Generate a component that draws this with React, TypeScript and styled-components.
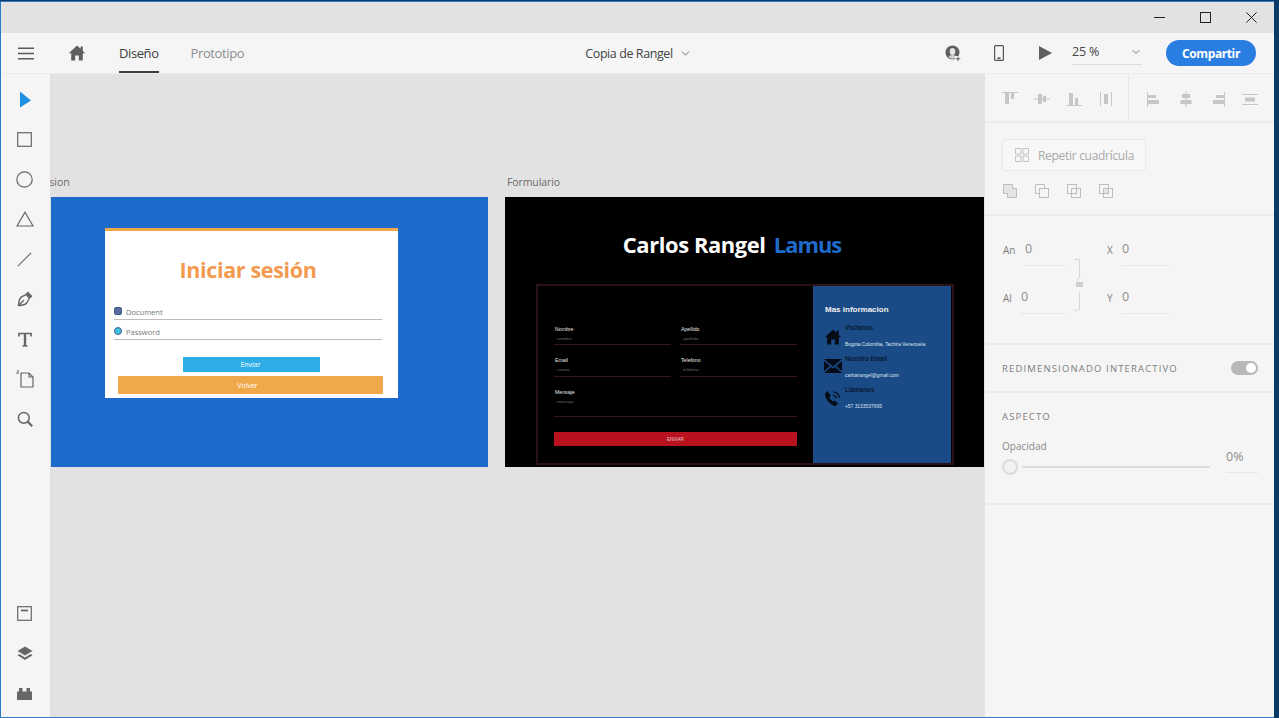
import React from 'react';
import styled, { createGlobalStyle } from 'styled-components';
import { ChevronDown } from 'lucide-react';

const Global = createGlobalStyle`
  html, body { margin: 0; padding: 0; background: #0b3a66; }
  body { font-family: "Open Sans", "Noto Sans", sans-serif; }
  * { box-sizing: border-box; }
`;

const Window = styled.div`
  width: 1279px;
  height: 718px;
  padding: 1px 5px 1px 1px;
  background: linear-gradient(90deg, #2b7cc4 0, #2b7cc4 1274px, #0b3a66 1274px);
  border-top: 1px solid #0b3a66;
  display: flex;
  flex-direction: column;
  overflow: hidden;
`;

const TitleBar = styled.div`
  height: 31px;
  flex: none;
  background: #e2e2e2;
  display: flex;
  align-items: center;
  justify-content: flex-end;
  padding-bottom: 1px;
`;

const WinButton = styled.div`
  width: 46px;
  height: 30px;
  display: flex;
  align-items: center;
  justify-content: center;
`;

const TopBar = styled.div`
  height: 41px;
  flex: none;
  background: #f5f5f5;
  display: grid;
  grid-template-columns: 1fr auto 1fr;
  align-items: center;
  border-bottom: 1px solid #ececec;
`;

const TopLeft = styled.div`
  display: flex;
  align-items: center;
  height: 100%;
`;

const TopRight = styled.div`
  display: flex;
  align-items: center;
  justify-content: flex-end;
  height: 100%;
  padding-right: 18px;
`;

const IconSlot = styled.div<{ $w: number; $ml?: number }>`
  width: ${p => p.$w}px;
  margin-left: ${p => p.$ml ?? 0}px;
  display: flex;
  align-items: center;
  justify-content: center;
  flex: none;
`;

const Tab = styled.div<{ $active?: boolean }>`
  height: 100%;
  display: flex;
  align-items: center;
  margin-right: 32px;
  padding-top: 2px;
  font-size: 13px;
  letter-spacing: -0.4px;
  color: ${p => (p.$active ? '#3c3c3c' : '#8e8e8e')};
  border-bottom: 2px solid ${p => (p.$active ? '#3c3c3c' : 'transparent')};
`;

const DocTitle = styled.div`
  display: flex;
  align-items: center;
  gap: 6px;
  font-size: 12.5px;
  letter-spacing: -0.42px;
  color: #444;
  padding-left: 2px;
`;

const Zoom = styled.div`
  width: 70px;
  height: 25px;
  margin: -2px 24px 0 10px;
  border-bottom: 1px solid #dedede;
  display: flex;
  align-items: center;
  justify-content: space-between;
  font-size: 12.5px;
  letter-spacing: -0.2px;
  color: #444;
  padding: 2px 0;
`;

const ShareButton = styled.div`
  width: 90px;
  height: 26px;
  border-radius: 13px;
  background: #2a7de1;
  color: #fff;
  font-size: 12px;
  font-weight: 700;
  letter-spacing: -0.4px;
  display: flex;
  align-items: center;
  justify-content: center;
`;

const Body = styled.div`
  flex: 1;
  min-height: 0;
  display: flex;
`;

const Tools = styled.div`
  width: 49px;
  flex: none;
  background: #f5f5f5;
  display: flex;
  flex-direction: column;
  justify-content: space-between;
  padding: 13px 0 12px;
  z-index: 1;
`;

const ToolGroup = styled.div<{ $gap: number }>`
  display: flex;
  flex-direction: column;
  align-items: center;
  gap: ${p => p.$gap}px;
  padding-right: 2px;
`;

const ToolIcon = styled.div`
  width: 24px;
  height: 24px;
  display: flex;
  align-items: center;
  justify-content: center;
`;

const Canvas = styled.div`
  flex: 1;
  position: relative;
  background: #e2e2e2;
  overflow: hidden;
`;

const ArtLabel = styled.div<{ $x: number }>`
  position: absolute;
  left: ${p => p.$x}px;
  top: 101px;
  font-size: 10.5px;
  letter-spacing: -0.1px;
  color: #6b6b6b;
  white-space: nowrap;
`;

const Artboard = styled.div<{ $x: number; $w: number; $bg: string; $cut?: number }>`
  position: absolute;
  left: ${p => p.$x}px;
  top: 123px;
  width: ${p => p.$w}px;
  height: 270px;
  background: ${p => p.$bg};
  overflow: hidden;
  clip-path: inset(0 0 0 ${p => p.$cut ?? 0}px);
`;

const LoginCard = styled.div`
  width: 293px;
  height: 170px;
  margin: 31px 0 0 97px;
  background: #fff;
  border-top: 3px solid #f0a94a;
  display: flex;
  flex-direction: column;
`;

const LoginTitle = styled.div`
  margin-top: 26px;
  height: 26px;
  line-height: 26px;
  padding-right: 7px;
  text-align: center;
  font-size: 21.5px;
  font-weight: 700;
  letter-spacing: -0.35px;
  color: #f39a4f;
`;

const FieldStack = styled.div`
  margin-top: 17px;
  display: flex;
  flex-direction: column;
`;

const LoginField = styled.div`
  margin: 0 16px 0 9px;
  height: 20px;
  border-bottom: 1.5px solid #bdbdbd;
  display: flex;
  align-items: center;
  gap: 4px;
  font-size: 7.5px;
  color: #777;
  padding-top: 5px;
`;

const FieldIcon = styled.span<{ $round?: boolean; $color: string }>`
  width: 8px;
  height: 8px;
  border-radius: ${p => (p.$round ? '50%' : '2px')};
  background: ${p => p.$color};
  border: 1px solid #3f5f87;
  flex: none;
  margin-top: -2px;
`;

const SendButton = styled.div`
  align-self: flex-start;
  margin: 17px 0 4px 78px;
  width: 137px;
  height: 15px;
  background: #2eaee6;
  color: #fff;
  font-size: 7px;
  display: flex;
  align-items: center;
  justify-content: center;
  padding-right: 2px;
`;

const BackButton = styled.div`
  margin: 0 15px 0 13px;
  height: 18px;
  border-radius: 1px;
  background: #f0a94a;
  color: #fff;
  font-size: 7px;
  display: flex;
  align-items: center;
  justify-content: center;
  padding-right: 6px;
`;

const FormHeading = styled.div`
  margin-top: 33px;
  height: 30px;
  line-height: 30px;
  text-align: center;
  padding-right: 25px;
  font-size: 21.9px;
  font-weight: 700;
  letter-spacing: -0.4px;
  white-space: nowrap;
  color: #fff;
  span { color: #1e6bcc; margin-left: 3px; letter-spacing: -1px; }
`;

const FormBox = styled.div`
  margin: 24px 0 0 31px;
  width: 418px;
  height: 181px;
  border: 2px solid #2b1216;
  display: flex;
`;

const FormLeft = styled.div`
  width: 275px;
  flex: none;
  padding: 40px 0 0 16px;
  font-family: "Liberation Sans", sans-serif;
`;

const FormGrid = styled.div`
  width: 243px;
  display: grid;
  grid-template-columns: 117px 117px;
  column-gap: 9px;
  row-gap: 12px;
`;

const FormField = styled.div<{ $wide?: boolean; $h?: number }>`
  grid-column: ${p => (p.$wide ? '1 / 3' : 'auto')};
  height: ${p => p.$h ?? 19}px;
  border-bottom: 1px solid #3a1418;
`;

const FormLabel = styled.div`
  font-size: 5.2px;
  line-height: 6px;
  margin-left: 1px;
  color: #e6e6e6;
`;

const FormHint = styled.div`
  font-size: 4.4px;
  line-height: 5px;
  margin: 4px 0 0 3px;
  color: #6d6d6d;
`;

const FormSend = styled.div`
  margin-top: 15px;
  width: 243px;
  height: 14px;
  background: #b8121f;
  color: #e8c8c8;
  font-size: 4.5px;
  display: flex;
  align-items: center;
  justify-content: center;
`;

const FormInfo = styled.div`
  width: 138px;
  flex: none;
  background: #1a4b87;
  padding: 19px 0 0 11px;
  font-family: "Liberation Sans", sans-serif;
`;

const InfoTitle = styled.div`
  font-size: 8px;
  line-height: 10px;
  font-weight: 700;
  margin-left: 1px;
  color: #f0f0f0;
  margin-bottom: 9px;
`;

const InfoRow = styled.div`
  height: 31px;
  display: flex;
  gap: 3px;
`;

const InfoIcon = styled.div`
  width: 18px;
  padding-top: 4px;
  flex: none;
`;

const InfoHead = styled.div`
  font-size: 6.3px;
  line-height: 8px;
  font-weight: 700;
  color: #071a33;
`;

const InfoText = styled.div`
  font-size: 4.9px;
  line-height: 6px;
  margin-top: 10px;
  color: #dfe6ef;
  white-space: nowrap;
`;

const Panel = styled.div`
  width: 289px;
  flex: none;
  background: #f5f5f5;
  display: flex;
  flex-direction: column;
  color: #8a8a8a;
`;

const Section = styled.div<{ $h: number }>`
  height: ${p => p.$h}px;
  flex: none;
  border-bottom: 2px solid #ebebeb;
`;

const AlignRow = styled.div`
  height: 100%;
  display: flex;
`;

const AlignGroup = styled.div<{ $line?: boolean; $w: number }>`
  width: ${p => p.$w}px;
  padding-left: 17px;
  padding-top: 17px;
  display: flex;
  gap: 16px;
  border-right: ${p => (p.$line ? '1px solid #e6e6e6' : 'none')};
`;

const RepeatButton = styled.div`
  margin: 16px 0 0 17px;
  width: 144px;
  height: 32px;
  border: 1px solid #e8e8e8;
  border-radius: 3px;
  background: #f7f7f7;
  display: flex;
  align-items: center;
  gap: 9px;
  padding-left: 12px;
  font-size: 12px;
  letter-spacing: -0.3px;
  color: #a8a8a8;
`;

const PathRow = styled.div`
  margin: 13px 0 0 18px;
  display: flex;
  gap: 18px;
`;

const TransformGrid = styled.div`
  position: relative;
  padding: 22px 0 0 18px;
  display: grid;
  grid-template-columns: 104px 64px;
  row-gap: 20px;
`;

const MetricCell = styled.div`
  height: 28px;
  display: flex;
  align-items: flex-start;
`;

const MetricLabel = styled.span<{ $w: number }>`
  width: ${p => p.$w}px;
  flex: none;
  font-size: 10px;
  line-height: 24px;
  color: #7d7d7d;
`;

const MetricValue = styled.div<{ $w: number }>`
  width: ${p => p.$w}px;
  height: 28px;
  border-bottom: 1px solid #e6e6e6;
  font-size: 12.5px;
  line-height: 22px;
  color: #8f8f8f;
`;

const LinkMark = styled.svg`
  position: absolute;
  left: 88px;
  top: 43px;
`;

const CapsRow = styled.div`
  height: 100%;
  padding: 0 16px 0 17px;
  display: flex;
  align-items: center;
  justify-content: space-between;
`;

const CapsLabel = styled.div`
  font-size: 9.5px;
  letter-spacing: 1.15px;
  color: #7d7d7d;
`;

const Toggle = styled.div`
  width: 27px;
  height: 14px;
  border-radius: 7px;
  background: #b8b8b8;
  display: flex;
  justify-content: flex-end;
  align-items: center;
  padding-right: 2px;
  &::after {
    content: '';
    width: 10px;
    height: 10px;
    border-radius: 50%;
    background: #fff;
  }
`;

const AspectBody = styled.div`
  padding: 17px 16px 0 17px;
`;

const OpacityLabel = styled.div`
  margin-top: 16px;
  font-size: 10px;
  line-height: 14px;
  color: #8a8a8a;
`;

const SliderRow = styled.div`
  display: flex;
  align-items: center;
  height: 22px;
`;

const Thumb = styled.div`
  width: 16px;
  height: 16px;
  border-radius: 50%;
  border: 2px solid #dcdcdc;
  background: #f2f2f2;
  flex: none;
  margin-top: 6px;
`;

const Track = styled.div`
  width: 188px;
  height: 2px;
  margin: 6px 0 0 4px;
  background: #dcdcdc;
  flex: none;
`;

const Percent = styled.div`
  width: 32px;
  margin: -8px 0 0 16px;
  height: 26px;
  border-bottom: 1px solid #e6e6e6;
  font-size: 12.5px;
  line-height: 20px;
  color: #8f8f8f;
  flex: none;
`;

const HomeSvg = ({ size = 18, color = '#5f5f5f' }: { size?: number; color?: string }) => (
  <svg width={size} height={size} viewBox="0 0 18 18" fill={color}>
    <path d="M9 1.5 0.8 9.2h2.4V16.5h4V11.4h3.6v5.1h4V9.2h2.4l-2.4-2.3V2.6h-2.2v2.2z" />
  </svg>
);

const tool = '#666';

const toolIcons = [
  <svg key="sel" width="14" height="17" viewBox="0 0 14 17"><path d="M2 .5 13 9.500 2 16.500z" fill="#1f8fe0" /></svg>,
  <svg key="rect" width="15" height="15" viewBox="0 0 15 15" fill="none" stroke={tool} strokeWidth="1.2"><rect x=".7" y=".7" width="13.6" height="13.6" /></svg>,
  <svg key="circ" width="17" height="17" viewBox="0 0 17 17" fill="none" stroke={tool} strokeWidth="1.2"><circle cx="8.5" cy="8.5" r="7.7" /></svg>,
  <svg key="tri" width="18" height="16" viewBox="0 0 18 16" fill="none" stroke={tool} strokeWidth="1.2"><path d="M9 1.3 17 15H1z" /></svg>,
  <svg key="line" width="15" height="15" viewBox="0 0 15 15" fill="none" stroke={tool} strokeWidth="1.1"><path d="M.8 14.2 14.2.8" /></svg>,
  <svg key="pen" width="16" height="16" viewBox="0 0 16 16" fill="none" stroke={tool} strokeWidth="1.4"><path d="M1.5 14.500c.2-4 1-7 3-8.600L9 3.600l3.400 3.400-2.300 4.500c-1.600 2.200-4.600 3-8.600 3zM1.500 14.500 6.800 9.200" /><path d="M9.800 1.600 14.400 6.200" strokeWidth="3" /></svg>,
  <svg key="text" width="14" height="15" viewBox="0 0 14 15" fill="none" stroke={tool}><path d="M7 1.500V14" strokeWidth="2.4" /><path d="M1 4.500V1.500h12v3" strokeWidth="1.7" /><path d="M4.300 14h5.400" strokeWidth="1.400" /></svg>,
  <svg key="board" width="18" height="18" viewBox="0 0 18 18" fill="none" stroke={tool} strokeWidth="1.2"><path d="M5 3h8l4 4v10H5zM13 3v4h4M0 3h3M2 0v2" /></svg>,
  <svg key="zoom" width="16" height="16" viewBox="0 0 16 16" fill="none" stroke={tool}><circle cx="6.800" cy="6.800" r="5.400" strokeWidth="1.500" /><path d="m10.800 10.800 4.400 4.400" strokeWidth="2.200" /></svg>,
];

const bottomIcons = [
  <svg key="assets" width="15" height="15" viewBox="0 0 15 15" fill="none" stroke={tool} strokeWidth="1.200"><rect x=".7" y=".7" width="13.600" height="13.600" /><path d="M4 4.500h7" strokeWidth="1.800" /></svg>,
  <svg key="layers" width="16" height="15" viewBox="0 0 16 15" fill={tool}><path d="M8 .5 15.500 5 8 9.500.5 5z" /><path d="M2.300 8 .5 9.300 8 14l7.500-4.700L13.700 8 8 11.500z" /></svg>,
  <svg key="plugins" width="15" height="13" viewBox="0 0 15 13" fill={tool}><path d="M0 13V4.500h2V1h3.500v3.500h4V1H13v3.500h2V13z" /></svg>,
];

const AlignIcon = ({ kind }: { kind: number }) => {
  const c = '#c6c6c6';
  const shapes = [
    <g key="0"><path d="M0 1.500h16" stroke={c} /><rect x="3" y="2" width="4" height="11" fill={c} /><rect x="9" y="2" width="3" height="6" fill={c} /></g>,
    <g key="1"><path d="M0 8h16" stroke={c} /><rect x="4" y="3" width="4" height="10" fill={c} /><rect x="9" y="5" width="3" height="6" fill={c} /></g>,
    <g key="2"><path d="M0 14.500h16" stroke={c} /><rect x="3" y="2" width="4" height="12" fill={c} /><rect x="9" y="7" width="3" height="7" fill={c} /></g>,
    <g key="3"><path d="M2.500 1v14M13.500 1v14" stroke={c} /><rect x="6" y="3" width="4" height="10" fill={c} /></g>,
    <g key="4"><path d="M1.500 1v15" stroke={c} /><rect x="2" y="4" width="8" height="3" fill={c} /><rect x="2" y="9" width="11" height="4" fill={c} /></g>,
    <g key="5"><path d="M8 0v16" stroke={c} /><rect x="4" y="3" width="8" height="4" fill={c} /><rect x="2.500" y="9" width="11" height="4" fill={c} /></g>,
    <g key="6"><path d="M14.500 1v15" stroke={c} /><rect x="6" y="4" width="8" height="3" fill={c} /><rect x="3" y="9" width="11" height="4" fill={c} /></g>,
    <g key="7"><path d="M0 3.500h16M0 13.500h16" stroke={c} /><rect x="3" y="6.500" width="10" height="4" fill={c} /></g>,
  ];
  return <svg width="16" height="16" viewBox="0 0 16 16">{shapes[kind]}</svg>;
};

const PathIcon = ({ mode }: { mode: number }) => (
  <svg width="14" height="14" viewBox="0 0 14 14" fill="none" stroke="#bdbdbd">
    {mode === 0 && <path d="M.5.500h9v4h4v9h-9v-4h-4z" fill="#e4e4e4" />}
    {mode === 1 && <path d="M4.500 9.500h-4v-9h9v4" />}
    {mode >= 1 && <rect x="4.500" y="4.500" width="9" height="9" />}
    {mode >= 2 && <rect x=".5" y=".5" width="9" height="9" />}
    {mode === 3 && <rect x="4.500" y="4.500" width="5" height="5" fill="#e4e4e4" />}
  </svg>
);

const Metric = ({ label, value, lw, w }: { label: string; value: string; lw: number; w: number }) => (
  <MetricCell>
    <MetricLabel $w={lw}>{label}</MetricLabel>
    <MetricValue $w={w}>{value}</MetricValue>
  </MetricCell>
);

const info = [
  {
    head: 'Visitanos',
    text: 'Bogota Colombia, Tachira Venezuela',
    icon: <HomeSvg size={18} color="#050c18" />,
  },
  {
    head: 'Nuestro Email',
    text: 'carlosrangel@gmail.com',
    icon: (
      <svg width="18" height="14" viewBox="0 0 18 14" fill="#050c18">
        <path d="M0 0h18L9 7.500z" />
        <path d="M0 2v10l6-5zM18 2v10l-6-5zM7 8l2 1.500L11 8l7 6H0z" />
      </svg>
    ),
  },
  {
    head: 'Llamanos',
    text: '+57 3133537695',
    icon: (
      <svg width="17" height="17" viewBox="0 0 17 17" fill="none" stroke="#050c18">
        <path d="M3 1.500 1.500 4c0 5 5 11 10 11.500l2-2-3-2.500-1.500 1C7 11 5 8.500 5 7l1.500-1.500z" fill="#050c18" />
        <path d="M9 5c2 .3 3 1.500 3.300 3.500M9.500 1.800c3.500.5 5.600 3 6 6" strokeWidth="1.200" />
      </svg>
    ),
  },
];

export default function App() {
  return (
    <>
      <Global />
      <Window>
        <TitleBar>
          <WinButton>
            <svg width="11" height="11" viewBox="0 0 11 11" stroke="#222"><path d="M0 5.500h11" /></svg>
          </WinButton>
          <WinButton>
            <svg width="11" height="11" viewBox="0 0 11 11" fill="none" stroke="#222"><rect x=".5" y=".5" width="10" height="10" /></svg>
          </WinButton>
          <WinButton>
            <svg width="11" height="11" viewBox="0 0 11 11" stroke="#222"><path d="m.4.400 10.200 10.200M10.600.400.4 10.600" /></svg>
          </WinButton>
        </TitleBar>
        <TopBar>
          <TopLeft>
            <IconSlot $w={50}>
              <svg width="16" height="13" viewBox="0 0 16 13" fill="none" stroke="#5a5a5a" strokeWidth="1.600">
                <path d="M0 1.200h16M0 6.500h16M0 11.800h16" />
              </svg>
            </IconSlot>
            <IconSlot $w={52}><HomeSvg /></IconSlot>
            <IconSlot $w={16} />
            <Tab $active>Diseño</Tab>
            <Tab>Prototipo</Tab>
          </TopLeft>
          <DocTitle>
            Copia de Rangel
            <ChevronDown size={13} strokeWidth={1.500} color="#555" />
          </DocTitle>
          <TopRight>
            <IconSlot $w={24}>
              <svg width="17" height="17" viewBox="0 0 17 17" fill="#5f5f5f">
                <circle cx="7.500" cy="7.500" r="7" />
                <ellipse cx="7.500" cy="6.500" rx="2.800" ry="3.500" fill="#e4e4e4" />
                <path d="M3.500 12.500c.8-1.800 2.200-2.500 4-2.500s3.200.7 4 2.500l-4 1.500z" fill="#d0d0d0" />
                <path d="M10 11h6v6h-6z" fill="#f5f5f5" />
                <path d="M13 11.500v4.500M10.800 13.800h4.500" stroke="#5f5f5f" />
              </svg>
            </IconSlot>
            <IconSlot $w={44} $ml={12}>
              <svg width="10" height="16" viewBox="0 0 10 16" fill="none" stroke="#555" strokeWidth="1.200">
                <rect x=".6" y=".6" width="8.800" height="14.800" rx="1" />
                <path d="M3.500 13.200h3" strokeWidth="1.600" />
              </svg>
            </IconSlot>
            <IconSlot $w={34} $ml={7}>
              <svg width="13" height="14" viewBox="0 0 13 14" fill="#5f5f5f"><path d="M0 0 13 7 0 14z" /></svg>
            </IconSlot>
            <Zoom>
              <span>25 %</span>
              <ChevronDown size={12} strokeWidth={1.800} color="#666" />
            </Zoom>
            <ShareButton>Compartir</ShareButton>
          </TopRight>
        </TopBar>
        <Body>
          <Tools>
            <ToolGroup $gap={16}>
              {toolIcons.map(icon => <ToolIcon key={icon.key}>{icon}</ToolIcon>)}
            </ToolGroup>
            <ToolGroup $gap={16}>
              {bottomIcons.map(icon => <ToolIcon key={icon.key}>{icon}</ToolIcon>)}
            </ToolGroup>
          </Tools>
          <Canvas>
            <ArtLabel $x={-43}>Iniciar sesion</ArtLabel>
            <Artboard $x={-42} $w={480} $cut={43} $bg="#1e6bcc">
              <LoginCard>
                <LoginTitle>Iniciar sesión</LoginTitle>
                <FieldStack>
                  <LoginField><FieldIcon $color="#5a6aa0" />Document</LoginField>
                  <LoginField><FieldIcon $round $color="#3fc4e0" />Password</LoginField>
                </FieldStack>
                <SendButton>Enviar</SendButton>
                <BackButton>Volver</BackButton>
              </LoginCard>
            </Artboard>
            <ArtLabel $x={457}>Formulario</ArtLabel>
            <Artboard $x={455} $w={479} $bg="#000">
              <FormHeading>Carlos Rangel <span>Lamus</span></FormHeading>
              <FormBox>
                <FormLeft>
                  <FormGrid>
                    <FormField><FormLabel>Nombre</FormLabel><FormHint>nombre</FormHint></FormField>
                    <FormField><FormLabel>Apellido</FormLabel><FormHint>apellido</FormHint></FormField>
                    <FormField $h={20}><FormLabel>Email</FormLabel><FormHint>correo</FormHint></FormField>
                    <FormField $h={20}><FormLabel>Telefono</FormLabel><FormHint>telefono</FormHint></FormField>
                    <FormField $wide $h={28}><FormLabel>Mensaje</FormLabel><FormHint>mensaje</FormHint></FormField>
                  </FormGrid>
                  <FormSend>ENVIAR</FormSend>
                </FormLeft>
                <FormInfo>
                  <InfoTitle>Mas informacion</InfoTitle>
                  {info.map(row => (
                    <InfoRow key={row.head}>
                      <InfoIcon>{row.icon}</InfoIcon>
                      <div>
                        <InfoHead>{row.head}</InfoHead>
                        <InfoText>{row.text}</InfoText>
                      </div>
                    </InfoRow>
                  ))}
                </FormInfo>
              </FormBox>
            </Artboard>
          </Canvas>
          <Panel>
            <Section $h={49}>
              <AlignRow>
                <AlignGroup $line $w={144}>
                  {[0, 1, 2, 3].map(k => <AlignIcon key={k} kind={k} />)}
                </AlignGroup>
                <AlignGroup $w={145}>
                  {[4, 5, 6, 7].map(k => <AlignIcon key={k} kind={k} />)}
                </AlignGroup>
              </AlignRow>
            </Section>
            <Section $h={93}>
              <RepeatButton>
                <svg width="14" height="14" viewBox="0 0 14 14" fill="none" stroke="#c4c4c4">
                  <path d="M.5.500h5.500v5.500H.5zM8 .5h5.500v5.500H8zM.5 8h5.500v5.500H.5zM8 8h5.500v5.500H8z" />
                </svg>
                Repetir cuadrícula
              </RepeatButton>
              <PathRow>
                <PathIcon mode={0} />
                <PathIcon mode={1} />
                <PathIcon mode={2} />
                <PathIcon mode={3} />
              </PathRow>
            </Section>
            <Section $h={129}>
              <TransformGrid>
                <Metric label="An" value="0" lw={22} w={41} />
                <Metric label="X" value="0" lw={15} w={48} />
                <Metric label="Al" value="0" lw={18} w={45} />
                <Metric label="Y" value="0" lw={15} w={48} />
                <LinkMark width="12" height="52" viewBox="0 0 12 52" fill="none" stroke="#d8d8d8">
                  <path d="M1 .5h5.500v18M6.500 33v18H1" />
                  <rect x="3" y="23" width="7" height="5" fill="#d0d0d0" stroke="none" />
                  <path d="M4.500 23v-2.500a2 2 0 0 1 3.500-1" />
                </LinkMark>
              </TransformGrid>
            </Section>
            <Section $h={48}>
              <CapsRow>
                <CapsLabel>REDIMENSIONADO INTERACTIVO</CapsLabel>
                <Toggle />
              </CapsRow>
            </Section>
            <Section $h={112}>
              <AspectBody>
                <CapsLabel>ASPECTO</CapsLabel>
                <OpacityLabel>Opacidad</OpacityLabel>
                <SliderRow>
                  <Thumb />
                  <Track />
                  <Percent>0%</Percent>
                </SliderRow>
              </AspectBody>
            </Section>
          </Panel>
        </Body>
      </Window>
    </>
  );
}
